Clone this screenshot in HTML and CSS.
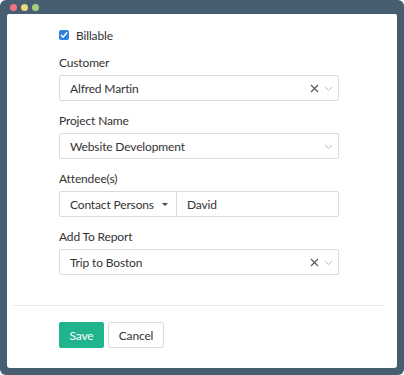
FILE: index.html
```html
<!DOCTYPE html>
<html>
<head>
<meta charset="utf-8">
<link rel="stylesheet" href="styles.css">
</head>
<body>
<div class="window">
  <div class="titlebar">
    <span class="dot red"></span><span class="dot yellow"></span><span class="dot green"></span>
  </div>
  <div class="panel">
    <div class="form">
      <label class="check-row">
        <span class="checkbox"><svg width="10" height="10" viewBox="0 0 10 10"><path d="M2.3 5.2 L4.2 7.1 L7.8 2.8" fill="none" stroke="#fff" stroke-width="1.5" stroke-linecap="round" stroke-linejoin="round"/></svg></span>
        <span>Billable</span>
      </label>

      <div class="label l-first">Customer</div>
      <div class="field">
        <span class="value">Alfred Martin</span>
        <span class="icons"><svg class="clear" width="9" height="9" viewBox="0 0 9 9"><path d="M1 1 L8 8 M8 1 L1 8" stroke="#555" stroke-width="1.1"/></svg><svg class="chev" width="9" height="6" viewBox="0 0 9 6"><path d="M1 1 L4.5 4.5 L8 1" fill="none" stroke="#b8b8b8" stroke-width="1"/></svg></span>
      </div>

      <div class="label">Project Name</div>
      <div class="field">
        <span class="value">Website Development</span>
        <span class="icons"><svg class="chev" width="9" height="6" viewBox="0 0 9 6"><path d="M1 1 L4.5 4.5 L8 1" fill="none" stroke="#b8b8b8" stroke-width="1"/></svg></span>
      </div>

      <div class="label">Attendee(s)</div>
      <div class="field split">
        <div class="split-left"><span>Contact Persons</span><span class="caret"></span></div>
        <div class="split-right">David</div>
      </div>

      <div class="label">Add To Report</div>
      <div class="field">
        <span class="value">Trip to Boston</span>
        <span class="icons"><svg class="clear" width="9" height="9" viewBox="0 0 9 9"><path d="M1 1 L8 8 M8 1 L1 8" stroke="#555" stroke-width="1.1"/></svg><svg class="chev" width="9" height="6" viewBox="0 0 9 6"><path d="M1 1 L4.5 4.5 L8 1" fill="none" stroke="#b8b8b8" stroke-width="1"/></svg></span>
      </div>
    </div>
    <div class="divider"></div>
    <div class="actions">
      <button class="btn btn-save">Save</button>
      <button class="btn btn-cancel">Cancel</button>
    </div>
  </div>
</div>
</body>
</html>
```
FILE: styles.css
```css
* { box-sizing: border-box; }
html, body { margin: 0; padding: 0; background: #ffffff; }
body { font-family: Lato, "Open Sans", sans-serif; color: #333; font-size: 12px; letter-spacing: -0.15px; }
.window {
  width: 404px; height: 375px;
  background: #475e71;
  border-radius: 6px;
  padding: 0 7px 7px;
  display: flex; flex-direction: column;
}
.titlebar { height: 14px; display: flex; align-items: center; gap: 4px; padding-left: 3px; }
.dot { width: 7px; height: 7px; border-radius: 50%; display: inline-block; }
.red { background: #f0727f; }
.yellow { background: #e9d97b; }
.green { background: #a7cd7a; }
.panel {
  flex: 1; background: #fff; border-radius: 2px 2px 3px 3px;
  padding-top: 11px;
}
.form { padding-left: 52px; width: 332px; }
.check-row { display: flex; align-items: center; gap: 7px; height: 20px; font-size: 12px; color: #333; }
.checkbox { width: 10px; height: 10px; border-radius: 2px; background: #2d7fe0; display: flex; }
.label { font-size: 12px; line-height: 18px; color: #333; margin-top: 11px; margin-bottom: 3px; }
.l-first { margin-top: 9px; }
.field {
  height: 26px; border: 1px solid #dcdcdc; border-radius: 2px;
  display: flex; align-items: center; justify-content: space-between;
  padding: 0 5px 0 10px;
}
.value { font-size: 12px; color: #333; }
.icons { display: flex; align-items: center; gap: 5px; }
.clear { display: block; }
.chev { display: block; margin-top: 1px; }
.split { padding: 0; }
.split-left {
  flex: 0 0 117px; height: 100%; border-right: 1px solid #dcdcdc; white-space: nowrap;
  display: flex; align-items: center; gap: 8px; padding-left: 10px; font-size: 12px;
}
.caret { width: 0; height: 0; border-left: 3px solid transparent; border-right: 3px solid transparent; border-top: 3px solid #444; margin-top: 1px; }
.split-right { flex: 1; padding-left: 10px; display: flex; align-items: center; height: 100%; font-size: 12px; }
.divider { height: 1px; background: #e8e8e8; margin: 30px 13px 0 6px; }
.actions { display: flex; gap: 4px; padding-left: 52px; margin-top: 16px; }
.btn {
  height: 26px; font-family: inherit; font-size: 12px; letter-spacing: -0.15px; border-radius: 2px; cursor: pointer;
}
.btn-save { width: 45px; background: #1fb48e; color: #fff; border: 1px solid #1fb48e; }
.btn-cancel { width: 56px; background: #fff; color: #333; border: 1px solid #dcdcdc; }
```
